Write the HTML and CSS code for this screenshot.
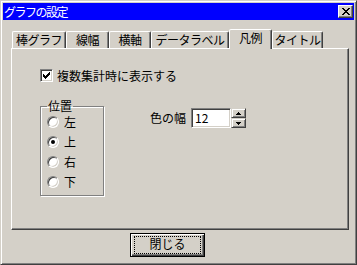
FILE: index.html
```html
<!DOCTYPE html>
<html lang="ja">
<head>
<meta charset="UTF-8">
<title>グラフの設定</title>
<link rel="stylesheet" href="styles.css">
</head>
<body>
<div class="dialog">
    <div class="titlebar">
        <span class="title">グラフの設定</span>
        <span class="close-btn">
            <svg width="8" height="7" viewBox="0 0 8 7"><path d="M0 0h2v1h-2zM6 0h2v1h-2zM1 1h2v1h-2zM5 1h2v1h-2zM2 2h4v1h-4zM3 3h2v1h-2zM2 4h4v1h-4zM1 5h2v1h-2zM5 5h2v1h-2zM0 6h2v1h-2zM6 6h2v1h-2z" fill="#000"/></svg>
        </span>
    </div>
    <div class="main">
        <ul class="tabs">
            <li class="tab t-bar">棒グラフ</li>
            <li class="tab t-line">線幅</li>
            <li class="tab t-axis">横軸</li>
            <li class="tab t-label">データラベル</li>
            <li class="tab t-legend active">凡例</li>
            <li class="tab t-title">タイトル</li>
        </ul>
        <div class="panel">
            <div class="check-row">
                <span class="checkbox">
                    <svg width="7" height="7" viewBox="0 0 7 7"><path d="M6 0h1v1h-1zM5 1h2v1h-2zM0 2h1v1h-1zM4 2h3v1h-3zM0 3h2v1h-2zM3 3h3v1h-3zM0 4h5v1h-5zM1 5h3v1h-3zM2 6h1v1h-1z" fill="#000"/></svg>
                </span>
                複数集計時に表示する
            </div>
            <div class="panel-row">
                <fieldset class="group">
                    <legend>位置</legend>
                    <div class="radio-row"><span class="radio"></span>左</div>
                    <div class="radio-row"><span class="radio checked"></span>上</div>
                    <div class="radio-row"><span class="radio"></span>右</div>
                    <div class="radio-row"><span class="radio"></span>下</div>
                </fieldset>
                <div class="field">
                    <span class="field-label">色の幅</span>
                    <span class="spin-input">12</span>
                    <span class="spin">
                        <span class="spin-btn"><svg width="5" height="3" viewBox="0 0 5 3"><path d="M2 0h1v1h-1zM1 1h3v1h-3zM0 2h5v1h-5z" fill="#000"/></svg></span>
                        <span class="spin-btn"><svg width="5" height="3" viewBox="0 0 5 3"><path d="M0 0h5v1h-5zM1 1h3v1h-3zM2 2h1v1h-1z" fill="#000"/></svg></span>
                    </span>
                </div>
            </div>
        </div>
        <div class="footer">
            <button class="btn default"><span class="focus">閉じる</span></button>
        </div>
    </div>
</div>
</body>
</html>
```

FILE: styles.css
```css
body,ul,li,fieldset,legend{margin:0;padding:0;}
ul{list-style-type:none;}
body{font:12px/14px "Noto Sans CJK JP",sans-serif;color:#000;background:#d4d0c8;}

.dialog{box-sizing:border-box;width:357px;height:265px;padding:2px;background:#d4d0c8;border:1px solid;border-color:#d4d0c8 #404040 #404040 #d4d0c8;box-shadow:inset 1px 1px #fff,inset -1px -1px #808080;display:flex;flex-direction:column;}

.titlebar{height:17px;background:#0000ff;display:flex;align-items:center;justify-content:space-between;padding:0 1px 0 1px;}
.titlebar .title{color:#fff;letter-spacing:-1.5px;line-height:17px;}
.close-btn{box-sizing:border-box;width:15px;height:13px;background:#d4d0c8;border:1px solid;border-color:#fff #404040 #404040 #fff;box-shadow:inset -1px -1px #808080;display:flex;align-items:center;justify-content:center;}
.close-btn svg{display:block;}

.main{padding:0 5px 0 8px;}

.tabs{display:flex;align-items:flex-end;height:19px;margin-top:9px;padding-left:1px;}
.tab{box-sizing:border-box;height:17px;border:1px solid;border-bottom:0;border-color:#fff #404040 transparent #fff;border-radius:2px 2px 0 0;box-shadow:inset -1px 0 #808080;text-align:center;line-height:15px;letter-spacing:-0.5px;white-space:nowrap;}
.tab.active{height:20px;margin-bottom:-1px;position:relative;z-index:1;background:#d4d0c8;}
.t-bar{width:54px;}
.t-line{width:43px;}
.t-axis{width:42px;}
.t-label{width:78px;}
.t-legend{width:43px;}
.t-title{width:51px;}

.panel{box-sizing:border-box;height:182px;border:1px solid;border-color:#fff #404040 #404040 #fff;box-shadow:inset -1px -1px #808080;padding:20px 0 0 28px;}

.check-row{display:flex;align-items:center;gap:4px;height:13px;}
.checkbox{box-sizing:border-box;width:13px;height:13px;background:#fff;border:1px solid;border-color:#808080 #fff #fff #808080;box-shadow:inset 1px 1px #404040,inset -1px -1px #d4d0c8;display:flex;align-items:center;justify-content:center;}
.checkbox svg{display:block;}

.panel-row{display:flex;align-items:flex-start;margin-top:17px;}

.group{box-sizing:border-box;width:64px;padding:0 0 3px 6px;border:1px solid #808080;box-shadow:1px 1px #fff,inset 1px 1px #fff;}
.group legend{padding:0 1px;line-height:14px;margin-bottom:-1px;}
.radio-row{display:flex;align-items:center;gap:5px;height:20px;}
.radio{box-sizing:border-box;width:12px;height:12px;border-radius:50%;background:#fff;border:1px solid;border-color:#808080 #fff #fff #808080;box-shadow:inset 1px 1px #404040,inset -1px -1px #d4d0c8;display:flex;align-items:center;justify-content:center;}
.radio.checked:after{content:"";width:4px;height:4px;border-radius:50%;background:#000;}

.field{display:flex;align-items:center;margin:9px 0 0 46px;}
.field-label{margin-right:5px;}
.spin-input{box-sizing:border-box;width:40px;height:20px;padding-left:3px;line-height:18px;background:#fff;border:1px solid;border-color:#808080 #fff #fff #808080;box-shadow:inset 1px 1px #404040,inset -1px -1px #d4d0c8;}
.spin{display:flex;flex-direction:column;width:15px;height:20px;}
.spin-btn{box-sizing:border-box;height:10px;background:#d4d0c8;border:1px solid;border-color:#d4d0c8 #404040 #404040 #d4d0c8;box-shadow:inset 1px 1px #fff,inset -1px -1px #808080;display:flex;align-items:center;justify-content:center;}
.spin-btn svg{display:block;}

.footer{margin-top:3px;padding-left:119px;}
.btn{box-sizing:border-box;width:75px;height:24px;padding:0;font:inherit;color:#000;background:#d4d0c8;border:1px solid #000;box-shadow:inset 1px 1px #fff,inset -1px -1px #404040,inset -2px -2px #808080;}
.btn .focus{display:block;height:16px;margin:0 3px;border:1px dotted #000;line-height:14px;text-align:center;}
```
